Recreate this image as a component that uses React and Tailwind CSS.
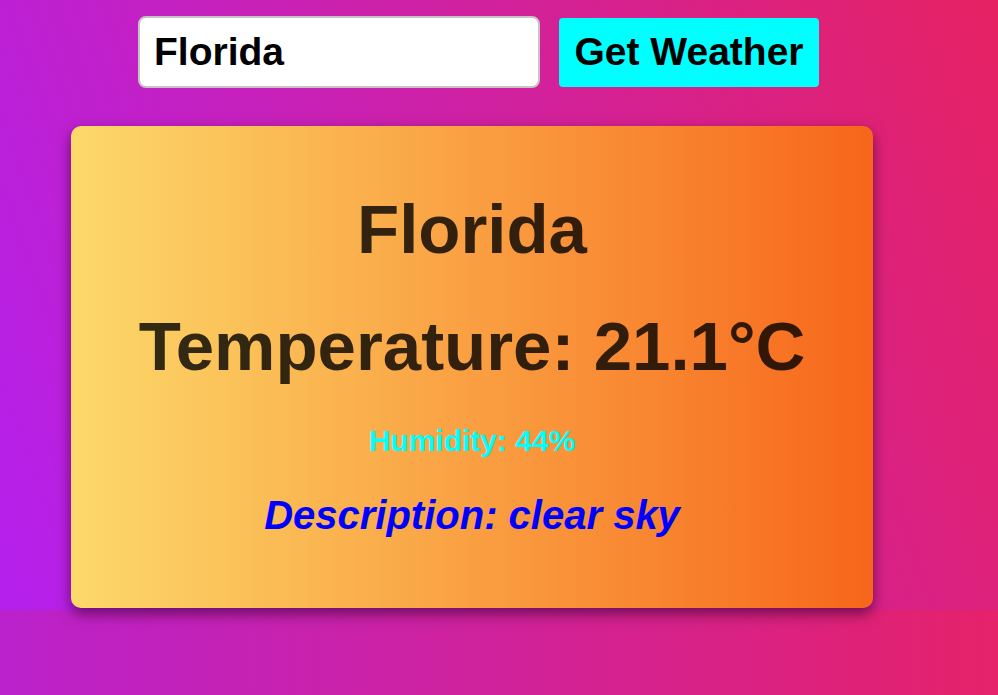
import { useState } from 'react'

export default function App() {
  const [city, setCity] = useState('Florida')

  return (
    <div className="min-h-[695px] bg-linear-to-r/srgb from-[#bb22cc] to-[#e5226a] font-['Liberation_Sans',Arial,sans-serif]">
      <div className="h-[610px] bg-linear-70/srgb from-[#b420ee] to-[#e62262] pt-[16px]">
        {/* Search row */}
        <div className="ml-[138px] flex items-center gap-[19px]">
          <input
            type="text"
            value={city}
            onChange={e => setCity(e.target.value)}
            className="w-[402px] h-[72px] rounded-[8px] border-2 border-[#c4c4c4] bg-white px-[14px] text-[39px] font-bold text-black outline-none"
          />
          <button className="w-[260px] h-[69px] rounded-[4px] bg-[#00ffff] text-[39px] font-bold text-black">
            Get Weather
          </button>
        </div>

        {/* Weather card */}
        <div className="ml-[71px] mt-[38px] w-[802px] h-[482px] rounded-[10px] bg-linear-to-r/srgb from-[#fcd96a] to-[#f7661a] shadow-[0_6px_14px_rgba(60,0,50,0.65)] pt-[69px] text-center">
          <h1 className="text-[69px] leading-none font-bold text-black/80">Florida</h1>
          <p className="mt-[48px] text-[69px] leading-none font-bold text-black/80">Temperature: 21.1°C</p>
          <p className="mt-[45px] text-[30px] leading-none font-bold text-[#00ffff]">Humidity: 44%</p>
          <p className="mt-[39px] text-[40px] leading-none font-bold italic text-[#0000ff]">Description: clear sky</p>
        </div>
      </div>
    </div>
  )
}
